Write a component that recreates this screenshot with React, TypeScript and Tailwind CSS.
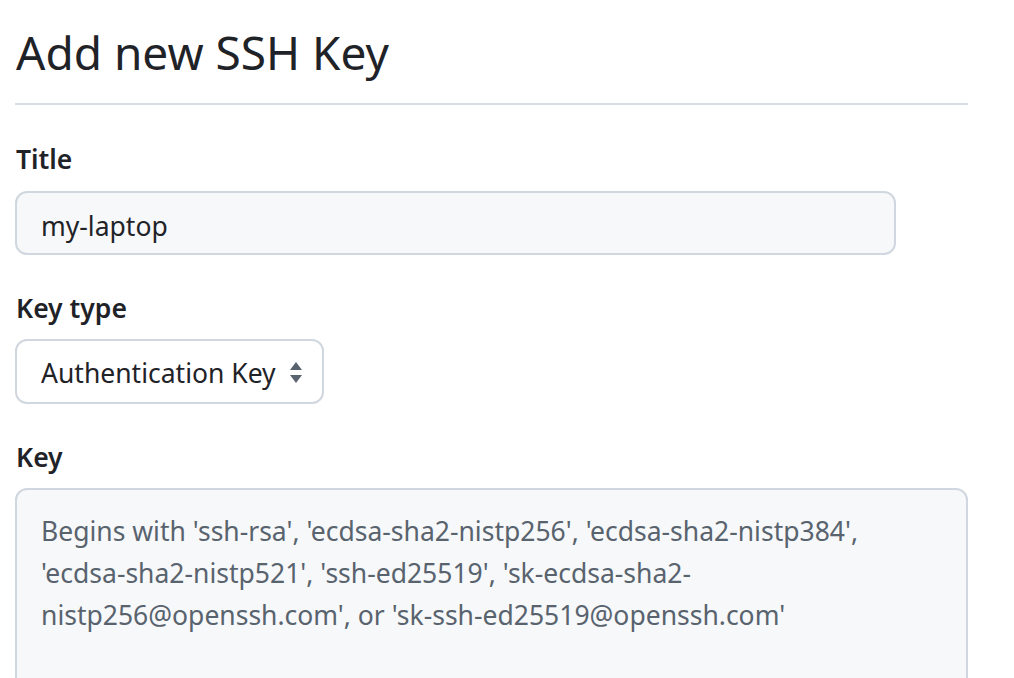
import { ChangeEvent, useState } from "react";

const FONT = { fontFamily: '"Noto Sans", "Open Sans", sans-serif' };

const PLACEHOLDER =
  "Begins with 'ssh-rsa', 'ecdsa-sha2-nistp256', 'ecdsa-sha2-nistp384', 'ecdsa-sha2-nistp521', 'ssh-ed25519', 'sk-ecdsa-sha2-nistp256@openssh.com', or 'sk-ssh-ed25519@openssh.com'";

const SelectCaret = () => (
  <svg width="14" height="24" viewBox="0 0 14 24" className="pointer-events-none absolute right-[21px] top-[22px]">
    <path d="M7 1 L13 9 H1 Z" fill="#59636e" />
    <path d="M1 14 H13 L7 22 Z" fill="#59636e" />
  </svg>
);

const App = () => {
  const [title, setTitle] = useState("my-laptop");
  const [keyType, setKeyType] = useState("auth");
  const [key, setKey] = useState("");

  return (
    <div className="min-h-screen bg-white pl-[15px] text-[#1f2328]" style={FONT}>
      <div className="w-[953px]">
        <h2 className="border-b-2 border-[#d8dee4] pb-[19px] pl-px pt-[20px] text-[46px] font-normal leading-[64px]">
          Add new SSH Key
        </h2>

        <form className="flex flex-col" onSubmit={(e) => e.preventDefault()}>
          <label className="mt-[33px] pl-px text-[26.5px] font-semibold leading-[42px]" htmlFor="ssh-title">
            Title
          </label>
          <input
            id="ssh-title"
            value={title}
            onChange={(e: ChangeEvent<HTMLInputElement>) => setTitle(e.target.value)}
            className="mt-[11px] h-[64px] w-[881px] rounded-[12px] border-2 border-[#d0d7de] bg-[#f6f8fa] px-[24px] pt-[5px] pb-0 text-[26.5px] outline-none"
          />

          <label className="mt-[32px] pl-px text-[26.5px] font-semibold leading-[42px]" htmlFor="ssh-type">
            Key type
          </label>
          <div className="relative mt-[10px] w-[309px]">
            <select
              id="ssh-type"
              value={keyType}
              onChange={(e: ChangeEvent<HTMLSelectElement>) => setKeyType(e.target.value)}
              className="h-[65px] w-full appearance-none rounded-[12px] border-2 border-[#d0d7de] bg-white pl-[24px] pr-[30px] pt-[5px] pb-0 text-[26.5px] outline-none"
            >
              <option value="auth">Authentication Key</option>
              <option value="signing">Signing Key</option>
            </select>
            <SelectCaret />
          </div>

          <label className="mt-[32px] pl-px text-[26.5px] font-semibold leading-[42px]" htmlFor="ssh-key">
            Key
          </label>
          <textarea
            id="ssh-key"
            value={key}
            onChange={(e: ChangeEvent<HTMLTextAreaElement>) => setKey(e.target.value)}
            placeholder={PLACEHOLDER}
            className="mt-[10px] h-[260px] w-[953px] resize-none rounded-[12px] border-2 border-[#d0d7de] bg-[#f6f8fa] px-[24px] pt-[20px] text-[26.5px] leading-[42px] outline-none placeholder:text-[#59636e]"
          />
        </form>
      </div>
    </div>
  );
};

export default App;
